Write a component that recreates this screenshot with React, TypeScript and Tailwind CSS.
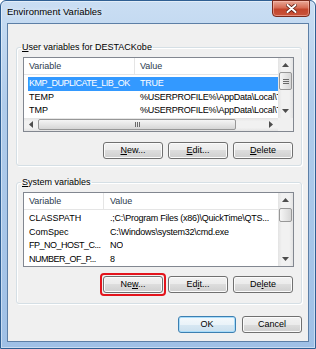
import type { ReactNode } from 'react'

const btnFace =
  'bg-[linear-gradient(#f2f2f2_0%,#ebebeb_50%,#dddddd_50%,#cfcfcf_100%)] shadow-[inset_0_0_0_1px_#fbfbfb]'

function U({ children }: { children: ReactNode }) {
  return <span className="underline underline-offset-[1px]">{children}</span>
}

function Button({ children, w = 'w-[60px]', isDefault = false }: { children: ReactNode; w?: string; isDefault?: boolean }) {
  return (
    <div
      className={`flex h-[17px] ${w} items-center justify-center rounded-[3px] border text-[9px] leading-none text-black ${
        isDefault
          ? 'border-[#3c7fb1] bg-[linear-gradient(#f4f9fc_0%,#eaf3f9_50%,#d8e8f3_50%,#cbe0ee_100%)] shadow-[inset_0_0_0_1px_#a8dcfa]'
          : `border-[#707070] ${btnFace}`
      }`}
    >
      <span>{children}</span>
    </div>
  )
}

function Arrow({ dir }: { dir: 'up' | 'down' | 'left' | 'right' }) {
  const vert = dir === 'up' || dir === 'down'
  const pts = {
    up: '3.5,0 7,4 0,4',
    down: '0,0 7,0 3.5,4',
    left: '4,0 4,7 0,3.5',
    right: '0,0 4,3.5 0,7',
  }[dir]
  return (
    <svg width={vert ? 7 : 4} height={vert ? 4 : 7} viewBox={vert ? '0 0 7 4' : '0 0 4 7'}>
      <polygon points={pts} fill="#4d4d4d" />
    </svg>
  )
}

function VScroll({ thumbMt, thumbH, grip }: { thumbMt: string; thumbH: string; grip?: boolean }) {
  return (
    <div className="flex w-[15px] shrink-0 flex-col bg-[linear-gradient(to_right,#e3e3e3,#f1f1f1_25%,#f1f1f1_75%,#e3e3e3)]">
      <div className="flex h-[14px] items-center justify-center">
        <Arrow dir="up" />
      </div>
      <div className="flex flex-1 flex-col">
        <div
          className={`${thumbMt} ${thumbH} mx-[1px] flex flex-col items-center justify-center gap-[1px] rounded-[2px] border border-[#979797] bg-[linear-gradient(to_right,#f5f5f5,#e6e6e6_50%,#d6d6d6)]`}
        >
          {grip && (
            <>
              <div className="h-px w-[6px] bg-[#6a6a6a]" />
              <div className="h-px w-[6px] bg-[#6a6a6a]" />
              <div className="h-px w-[6px] bg-[#6a6a6a]" />
            </>
          )}
        </div>
      </div>
      <div className="flex h-[14px] items-center justify-center">
        <Arrow dir="down" />
      </div>
    </div>
  )
}

function HScroll() {
  return (
    <div className="flex h-[13px]">
      <div className="flex flex-1 bg-[linear-gradient(#e3e3e3,#f1f1f1_25%,#f1f1f1_75%,#e3e3e3)]">
        <div className="flex w-[14px] items-center justify-center">
          <Arrow dir="left" />
        </div>
        <div className="my-[1px] flex w-[198px] items-center justify-center gap-[1px] rounded-[2px] border border-[#979797] bg-[linear-gradient(#f5f5f5,#e6e6e6_50%,#d6d6d6)]">
          <div className="h-[5px] w-px bg-[#6a6a6a]" />
          <div className="h-[5px] w-px bg-[#6a6a6a]" />
          <div className="h-[5px] w-px bg-[#6a6a6a]" />
        </div>
        <div className="flex-1" />
        <div className="flex w-[14px] items-center justify-center">
          <Arrow dir="right" />
        </div>
      </div>
      <div className="w-[15px] bg-[#f0f0f0]" />
    </div>
  )
}

type Row = { name: string; value: string; selected?: boolean }

function ListBody({ rows, col1, valPad }: { rows: Row[]; col1: string; valPad: string }) {
  return (
    <div className="min-w-0 flex-1 overflow-hidden">
      <div className="flex h-[17px] border-b border-[#e5e5e5] text-[9px] leading-[16px] text-[#2b3a4d]">
        <div className={`${col1} shrink-0 border-r border-[#e5e5e5] pl-[5px]`}>Variable</div>
        <div className={`${valPad}`}>Value</div>
      </div>
      <div className="pt-[2px]">
        {rows.map((r) => (
          <div
            key={r.name}
            className={`ml-[4px] flex h-[13.5px] items-center text-[9px] leading-none whitespace-nowrap ${
              r.selected ? 'bg-[#3399ff] text-white' : 'text-black'
            }`}
          >
            <div
              className={`${col1} -mr-[4px] shrink-0 overflow-hidden pl-[1px] ${
                r.name.includes('_') ? 'tracking-[-0.5px]' : ''
              }`}
            >
              {r.name}
            </div>
            <div className={`min-w-0 overflow-hidden tracking-[-0.25px] ${valPad}`}>{r.value}</div>
          </div>
        ))}
      </div>
    </div>
  )
}

const userRows: Row[] = [
  { name: 'KMP_DUPLICATE_LIB_OK', value: 'TRUE', selected: true },
  { name: 'TEMP', value: '%USERPROFILE%\\AppData\\Local\\Temp' },
  { name: 'TMP', value: '%USERPROFILE%\\AppData\\Local\\Temp' },
]

const systemRows: Row[] = [
  { name: 'CLASSPATH', value: '.;C:\\Program Files (x86)\\QuickTime\\QTS...' },
  { name: 'ComSpec', value: 'C:\\Windows\\system32\\cmd.exe' },
  { name: 'FP_NO_HOST_C...', value: 'NO' },
  { name: 'NUMBER_OF_P...', value: '8' },
]

export default function App() {
  return (
    <div className="h-[349px] w-[316px] overflow-hidden bg-white font-['Liberation_Sans',Arial,sans-serif]">
      <div className="flex h-full w-full flex-col rounded-t-[6px] border border-[#2f5f93] bg-[linear-gradient(#cadef3,#b0cceb_30%,#9fc0e6)] px-[6px] pb-[6px] shadow-[inset_0_0_0_1px_rgba(255,255,255,0.45)]">
        <div className="flex h-[22px] items-start justify-between">
          <span className="pt-[5px] text-[9.5px] leading-[12px] text-black [text-shadow:0_0_5px_#fff]">
            Environment Variables
          </span>
          <div className="-mt-px -mr-[1px] flex h-[17px] w-[38px] items-center justify-center rounded-b-[4px] border border-[#7a2a1c] bg-[linear-gradient(#e9a897,#d66c55_45%,#c3452c_55%,#c9543a)] shadow-[inset_0_0_0_1px_rgba(255,200,190,0.5)]">
            <svg width="11" height="9" viewBox="0 0 11 9">
              <path d="M1.5 1 L9.5 8 M9.5 1 L1.5 8" stroke="#5a1a10" strokeWidth="3.6" strokeLinecap="round" />
              <path d="M1.5 1 L9.5 8 M9.5 1 L1.5 8" stroke="#fff" strokeWidth="2" strokeLinecap="round" />
            </svg>
          </div>
        </div>

        <div className="flex flex-1 flex-col border border-[#5d7fa6] bg-[#f0f0f0] pt-[17px] pr-[6px] pl-[8px]">
          <fieldset className="min-w-0 rounded-[3px] border border-[#d5dfe5] pt-[4px] pr-[7px] pb-[6px] pl-[6px] shadow-[inset_1px_1px_0_#fff,1px_1px_0_#fff]">
            <legend className="-ml-[2px] px-[1px] text-[9px] leading-[12px] text-black">
              <U>U</U>ser variables for DESTACKobe
            </legend>
            <div className="flex h-[75px] flex-col border border-[#828790] bg-white">
              <div className="flex min-h-0 flex-1">
                <ListBody rows={userRows} col1="w-[111px]" valPad="pl-[5px]" />
                <VScroll thumbMt="mt-0" thumbH="h-[18px]" grip />
              </div>
              <HScroll />
            </div>
            <div className="mt-[10px] flex justify-end gap-[5px] pr-[1px]">
              <Button>
                <U>N</U>ew...
              </Button>
              <Button>
                <U>E</U>dit...
              </Button>
              <Button>
                <U>D</U>elete
              </Button>
            </div>
          </fieldset>

          <fieldset className="mt-[10px] min-w-0 rounded-[3px] border border-[#d5dfe5] pt-[4px] pr-[7px] pb-[10px] pl-[6px] shadow-[inset_1px_1px_0_#fff,1px_1px_0_#fff]">
            <legend className="-ml-[2px] px-[1px] text-[9px] leading-[12px] text-black">
              <U>S</U>ystem variables
            </legend>
            <div className="flex h-[75px] border border-[#828790] bg-white">
              <ListBody rows={systemRows} col1="w-[80px]" valPad="pl-[6px]" />
              <VScroll thumbMt="mt-[1px]" thumbH="h-[14px]" />
            </div>
            <div className="mt-[9px] flex justify-end gap-[5px] pr-[1px]">
              <div className="rounded-[1px] outline-2 outline-offset-1 outline-[#e3141c]">
                <Button>
                  Ne<U>w</U>...
                </Button>
              </div>
              <Button>
                Ed<U>i</U>t...
              </Button>
              <Button>
                De<U>l</U>ete
              </Button>
            </div>
          </fieldset>

          <div className="mt-[12px] flex justify-end gap-[6px]">
            <Button w="w-[58px]" isDefault>
              OK
            </Button>
            <Button>Cancel</Button>
          </div>
        </div>
      </div>
    </div>
  )
}
